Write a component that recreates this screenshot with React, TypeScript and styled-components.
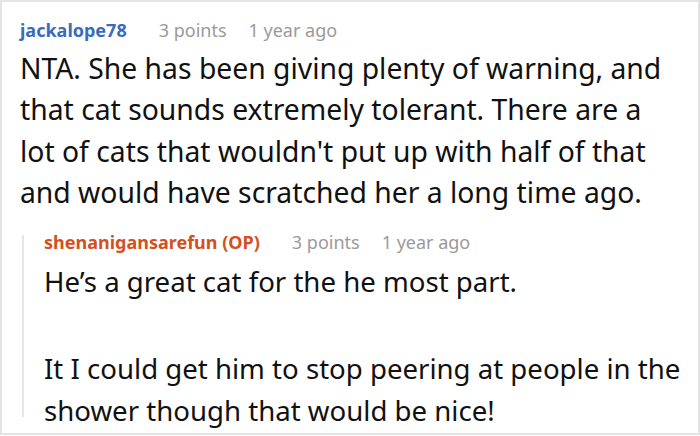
import React from "react";
import styled, { createGlobalStyle } from "styled-components";

type Comment = {
  author: string;
  op?: boolean;
  points: number;
  age: string;
  paragraphs: string[];
};

const parent: Comment = {
  author: "jackalope78",
  points: 3,
  age: "1 year ago",
  paragraphs: [
    "NTA. She has been giving plenty of warning, and that cat sounds extremely tolerant. There are a lot of cats that wouldn't put up with half of that and would have scratched her a long time ago.",
  ],
};

const reply: Comment = {
  author: "shenanigansarefun",
  op: true,
  points: 3,
  age: "1 year ago",
  paragraphs: [
    "He\u2019s a great cat for the he most part.",
    "It I could get him to stop peering at people in the shower though that would be nice!",
  ],
};

const App = () => {
  return (
    <>
      <GlobalStyle />
      <Frame>
        <Thread>
          <Header>
            <Author $op={false}>{parent.author}</Author>
            <Meta>{parent.points} points</Meta>
            <Meta>{parent.age}</Meta>
          </Header>
          <Text $size={28.3} $lh={41.3}>
            {parent.paragraphs.map((p, i) => (
              <Para key={i}>{p}</Para>
            ))}
          </Text>
          <Reply>
            <Header $compact>
              <Author $op>
                {reply.author}
                {reply.op ? " (OP)" : ""}
              </Author>
              <Meta>{reply.points} points</Meta>
              <Meta>{reply.age}</Meta>
            </Header>
            <Text $size={27.6} $lh={42}>
              {reply.paragraphs.map((p, i) => (
                <Para key={i}>{p}</Para>
              ))}
            </Text>
          </Reply>
        </Thread>
      </Frame>
    </>
  );
};

export default App;

const GlobalStyle = createGlobalStyle`
  html, body {
    margin: 0;
    padding: 0;
    background: #fff;
  }
  * {
    box-sizing: border-box;
  }
`;

const Frame = styled.div`
  width: 700px;
  height: 435px;
  border: 2px solid #e4e4e4;
  background: #fff;
  overflow: hidden;
  font-family: "Noto Sans", "Open Sans", sans-serif;
`;

const Thread = styled.div`
  padding: 16px 20px 0 18px;
`;

const Header = styled.div<{ $compact?: boolean }>`
  display: flex;
  align-items: center;
  gap: 22px;
  height: ${(p) => (p.$compact ? 14 : 24)}px;
  line-height: ${(p) => (p.$compact ? 14 : 24)}px;
  white-space: nowrap;
`;

const Author = styled.span<{ $op: boolean }>`
  font-size: 18px;
  font-weight: 700;
  color: ${(p) => (p.$op ? "#d4501e" : "#3b6bbd")};
  margin-right: 10px;
`;

const Meta = styled.span`
  font-size: 18px;
  color: #9a9a9a;
`;

const Text = styled.div<{ $size: number; $lh: number }>`
  margin-top: 6px;
  font-size: ${(p) => p.$size}px;
  line-height: ${(p) => p.$lh}px;
  color: #111;
`;

const Para = styled.p`
  margin: 0 0 45px;

  &:last-child {
    margin-bottom: 0;
  }
`;

const Reply = styled.div`
  margin: 22px -20px 0 2px;
  padding-left: 20px;
  height: 182px;
  border-left: 2px solid #e6e6e6;

  ${Text} {
    margin-top: 11px;
  }
`;
